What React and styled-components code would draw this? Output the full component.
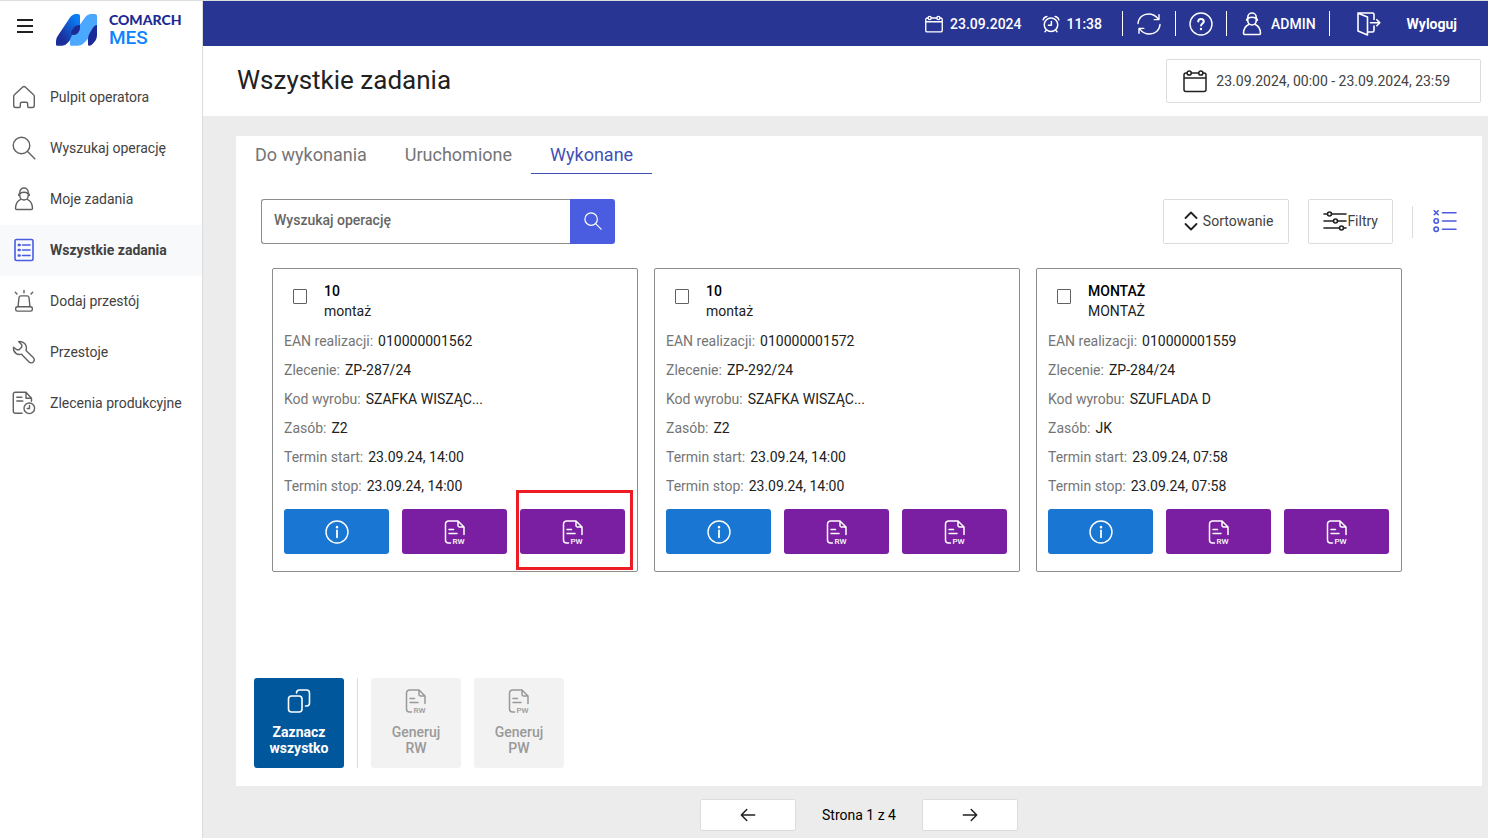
import React from "react";
import styled, { createGlobalStyle, css } from "styled-components";

const Global = createGlobalStyle`
  *, *::before, *::after { box-sizing: border-box; }
  body {
    margin: 0;
    background: #ececec;
    color: #212121;
    font-family: Roboto, "Liberation Sans", sans-serif;
    font-size: 14px;
    line-height: 20px;
  }
  button, input { font: inherit; color: inherit; }
  button { cursor: pointer; padding: 0; border: 0; background: none; }
  a { color: inherit; text-decoration: none; }
  h1, p, ul, dl, dd { margin: 0; padding: 0; }
  ul { list-style: none; }
`;

/* ---------- icons ---------- */

const Svg = styled.svg`
  display: block;
  flex: none;
  width: ${(p) => p.$size || 24}px;
  height: ${(p) => p.$size || 24}px;
  fill: none;
  stroke: currentColor;
  stroke-width: ${(p) => p.$stroke || 1.4};
  stroke-linecap: round;
  stroke-linejoin: round;
`;

const Icon = ({ size, stroke, children }) => (
  <Svg viewBox="0 0 24 24" $size={size} $stroke={stroke} aria-hidden="true">
    {children}
  </Svg>
);

const MenuIcon = () => (
  <Icon stroke={2}>
    <path d="M4 6h16M4 12h16M4 18h16" strokeLinecap="butt" />
  </Icon>
);
const HomeIcon = () => (
  <Icon>
    <path d="M1.7 11.2v9.3a2 2 0 0 0 2 2h3.6a1 1 0 0 0 1-1v-2.7a1.6 1.6 0 0 1 1.6-1.6h4.2a1.6 1.6 0 0 1 1.6 1.6v2.7a1 1 0 0 0 1 1h3.600a2 2 0 0 0 2-2v-9.300a2 2 0 0 0-.7-1.500L13.500 2.200a2.200 2.200 0 0 0-3 0L2.400 9.700a2 2 0 0 0-.7 1.500z" />
  </Icon>
);
const SearchIcon = ({ size, stroke }) => (
  <Icon size={size} stroke={stroke}>
    <circle cx="9.5" cy="9.5" r="8.3" />
    <path d="M15.500 15.500l7.300 7.300" />
  </Icon>
);
const WorkerIcon = ({ stroke }) => (
  <Icon stroke={stroke}>
    <path d="M7.800 6V5.200a4.200 4.200 0 0 1 8.400 0V6M6.600 8.200c0-1.100.7-1.700 1.500-1.900 2.400-1.300 5.400-1.300 7.800 0 .8.2 1.500.8 1.500 1.900M7.800 7.500v1.300a4.200 4.200 0 0 0 8.400 0V7.500" />
    <path d="M8.700 12.400c-3 1.200-5 3.900-5.200 8.900 0 .8.400 1.200 1.100 1.200h14.800c.7 0 1.100-.4 1.100-1.200-.2-5-2.200-7.700-5.200-8.900" />
  </Icon>
);
const TasksIcon = () => (
  <Icon stroke={1.6}>
    <rect x="3" y="1.5" width="18" height="21" rx="1.5" />
    <path d="M10.500 7h7.500M10.500 12h7.500M10.500 17.500h7.500" />
    <path d="M6.800 7h.8M6.800 12h.8M6.800 17.500h.8" strokeWidth="2.6" />
  </Icon>
);
const AlarmLampIcon = () => (
  <Icon>
    <path d="M6 17.800l1-9.100a2 2 0 0 1 2-1.800h6a2 2 0 0 1 2 1.800l1 9.100" />
    <rect x="3.7" y="17.8" width="16.6" height="4.3" rx="1.5" />
    <path d="M12 1.500v2.200M3.300 3.200l1.700 1.700M20.700 3.200L19 4.900" />
  </Icon>
);
const WrenchIcon = () => (
  <Icon>
    <path d="M1.500 7.200c-.5 5.200 3.600 8.300 8 7l7.300 7.500a2.900 2.900 0 0 0 4.800-.1 2.900 2.900 0 0 0-.4-4.100l-7.200-6.900c1.700-5.300-2.300-9.900-7.400-9l3.200 3.200v2.300l-2.700 2.700H4.900z" />
  </Icon>
);
const OrderIcon = () => (
  <Icon>
    <path d="M10 22.300H3.300a2 2 0 0 1-2-2V3.200a2 2 0 0 1 2-2H14l5.500 6v3M14 1.500v5.700h5.500M4.800 6.200h5M4.800 10h6" />
    <circle cx="17.3" cy="17.3" r="5.3" />
    <path d="M17.500 14.500v3h-2.300" />
  </Icon>
);
const CalendarIcon = ({ size, stroke }) => (
  <Icon size={size} stroke={stroke}>
    <path d="M4 4H3a2 2 0 0 0-2 2v14.500a2 2 0 0 0 2 2h18a2 2 0 0 0 2-2V6a2 2 0 0 0-2-2h-1M8.300 4h7.400M1 9h22" />
    <circle cx="6.2" cy="4" r="2.1" />
    <circle cx="17.8" cy="4" r="2.1" />
  </Icon>
);
const ClockIcon = () => (
  <Icon size={18} stroke={2}>
    <circle cx="12" cy="13" r="9" />
    <path d="M12.500 8.500v5.200H8.500M5.500 20.500L4 22.300M18.500 20.500l1.500 1.800M1.500 6.500a6 6 0 0 1 5-4.500M22.500 6.500a6 6 0 0 0-5-4.500" />
  </Icon>
);
const RefreshIcon = () => (
  <Icon>
    <path d="M1 11.500C1.500 5.500 6 2 11.500 2c4.200 0 7.500 2 9.800 5.200M22 2.800v4.800h-4.800M23 12.500C22.500 18.500 18 22 12.500 22c-4.200 0-7.500-2-9.800-5.200M2 21.200v-4.800h4.800" />
  </Icon>
);
const HelpIcon = () => (
  <Icon>
    <circle cx="12" cy="12" r="11" />
    <path d="M9.300 9.500c0-1.600 1.100-2.600 2.700-2.600s2.800 1 2.800 2.500c0 2-2.700 2.100-2.700 4.200" strokeWidth="2" />
    <path d="M12 16.900v.2" strokeWidth="2.4" />
  </Icon>
);
const ExitIcon = () => (
  <Icon stroke={1.6}>
    <path d="M1 1.200v17.800l9.500 4V5zM1 1h14.500A1.500 1.500 0 0 1 17 2.500v5M17 14v4.500a1.500 1.500 0 0 1-1.500 1.500h-5" />
    <path d="M13.500 10.700h9.300M19.800 7.700l3 3-3 3" />
  </Icon>
);
const SortIcon = () => (
  <Icon stroke={1.8}>
    <path d="M6.500 9L12 3.500 17.500 9M6.500 15l5.500 5.500 5.500-5.500" />
  </Icon>
);
const FilterIcon = () => (
  <Icon stroke={1.6}>
    <path d="M1 5h3.500M8.500 5H23M1 12h9.500M14.500 12H23M1 19h15.500M20.500 19H23" />
    <circle cx="6.5" cy="5" r="2" />
    <circle cx="12.5" cy="12" r="2" />
    <circle cx="18.5" cy="19" r="2" />
  </Icon>
);
const ListModeIcon = () => (
  <Icon stroke={1.6}>
    <path d="M1.200 1.700l4 4M5.200 1.700l-4 4M9.500 3.700H23M9.500 12H23M9.500 20.300H23" />
    <circle cx="3.2" cy="12" r="2.2" />
    <circle cx="3.2" cy="20.3" r="2.2" />
  </Icon>
);
const InfoIcon = () => (
  <Icon>
    <circle cx="12" cy="12" r="11" />
    <path d="M12 10.500v6.800" strokeWidth="1.8" />
    <path d="M12 7v.2" strokeWidth="2.4" />
  </Icon>
);
const DocIcon = ({ code }) => (
  <Icon stroke={1.5}>
    <path d="M7.500 23H5.500a3 3 0 0 1-3-3V4a3 3 0 0 1 3-3H15l6 6v7.500M15 1.200V5.500A1.500 1.500 0 0 0 16.500 7H21M6 9.500h4.500M6 13.500h8" />
    <text x="9.500" y="23.500" fill="currentColor" stroke="none" fontSize="8" fontWeight="500">
      {code}
    </text>
  </Icon>
);
const SelectAllIcon = () => (
  <Icon stroke={1.6}>
    <rect x="1.5" y="7" width="13.5" height="16" rx="3" />
    <path d="M9.500 4V4a3 3 0 0 1 3-3h7a3 3 0 0 1 3 3v10a3 3 0 0 1-3 3h-1" />
  </Icon>
);
const ArrowIcon = ({ right }) => (
  <Icon size={20} stroke={1.8}>
    <path d={right ? "M4 12h16M13.500 5.500l6.500 6.500-6.500 6.500" : "M20 12H4M10.500 5.500L4 12l6.500 6.500"} />
  </Icon>
);

const LogoMark = styled.svg`
  display: block;
  width: 42px;
  height: 32px;
`;

const Logo = () => (
  <LogoMark viewBox="0 0 42 32" aria-hidden="true">
    <defs>
      <linearGradient id="stroke-blue" x1="0" y1="1" x2="1" y2="0">
        <stop offset="0.25" stopColor="#1b2f9c" />
        <stop offset="0.85" stopColor="#0b7df5" />
      </linearGradient>
    </defs>
    <path fill="url(#stroke-blue)" d="M0 30.500V27q0-3 2-5.500L14 3.500Q16.500 0 20 0h2q2 0 2 2v9q0 3-2 6L12 28.500Q9.500 31.700 6 31.700H1.200Q0 31.700 0 30.500z" />
    <path fill="#4aa9ff" d="M14 30.500V27q0-3 2-5.500L29 3.500Q31.500 0 35 0h4q2 0 2 2v10q0 3-2 5.500L28 29q-2.300 2.700-6 2.700h-6.500q-1.500 0-1.500-1.200z" />
    <path fill="#1b2a94" d="M24 11v3q0 2-1.300 4-1.700 3-5.200 3-2.500 0-2.500-2 0-2 2.500-5 2-3 6.500-3z" />
    <path fill="#1b2a94" d="M32 30.500V25q0-3 1.500-5.500l3-5Q38.500 11 41 11v10q0 3-1.500 5.500l-2.500 3q-1.500 2.200-4 2.200-1 0-1-1.200z" />
  </LogoMark>
);

/* ---------- shell ---------- */

const Shell = styled.div`
  display: flex;
  min-height: 100vh;
  border-top: 1px solid #dcdfe0;
`;

const Sidebar = styled.aside`
  flex: none;
  width: 203px;
  background: #fff;
  border-right: 1px solid #dcdcdc;
`;

const Brand = styled.div`
  display: flex;
  align-items: flex-start;
  height: 71px;
  padding: 13px 0 0 13px;
`;

const MenuButton = styled.button`
  width: 24px;
  height: 24px;
  margin-right: 19px;
`;

const BrandName = styled.div`
  display: flex;
  flex-direction: column;
  margin-left: 11px;
`;

const BrandCompany = styled.span`
  color: #1b2a94;
  font: 900 14px/12px Lato, sans-serif;
`;

const BrandProduct = styled.span`
  color: #0d84ff;
  font-size: 19px;
  font-weight: 500;
  line-height: 24px;
`;

const NavLink = styled.a`
  display: flex;
  align-items: center;
  gap: 14px;
  height: 51px;
  padding: 0 11px 2px 12px;
  white-space: nowrap;
  color: #424242;
  svg { color: #616161; }
  ${(p) =>
    p.$active &&
    css`
      background: #f7f9fb;
      font-weight: 700;
      svg { color: #4a5ce0; }
    `}
`;

const Main = styled.div`
  display: flex;
  flex-direction: column;
  flex: 1;
  min-width: 0;
`;

const TopBar = styled.header`
  display: flex;
  align-items: center;
  justify-content: flex-end;
  height: 45px;
  padding-right: 4px;
  background: #283593;
  color: #fff;
`;

const TopItem = styled.div`
  display: flex;
  align-items: center;
  gap: 7px;
  margin-right: 20px;
  font-weight: 500;
`;

const TopButton = styled.button`
  display: flex;
  align-items: center;
  gap: ${(p) => p.$gap || 7}px;
  margin: 0 ${(p) => p.$side || 13}px;
  font-weight: ${(p) => p.$weight || 500};
`;

const TopDivider = styled.span`
  width: 1px;
  height: 25px;
  background: #fff;
`;

const PageHead = styled.div`
  display: flex;
  align-items: center;
  justify-content: space-between;
  height: 70px;
  padding: 0 7px 0 34px;
  background: #fff;
`;

const Title = styled.h1`
  padding-bottom: 2px;
  font-size: 26px;
  font-weight: 400;
  line-height: 32px;
`;

const OutlineButton = styled.button`
  display: flex;
  align-items: center;
  justify-content: center;
  height: 45px;
  padding: 0 ${(p) => p.$pad}px 2px;
  background: #fff;
  border: 1px solid #dcdcdc;
  border-radius: 2px;
  white-space: nowrap;
  color: #424242;
  svg { color: #212121; }
`;

const DateRangeButton = styled(OutlineButton)`
  gap: 9px;
  height: 44px;
  padding: 0 30px 0 16px;
`;

const Panel = styled.main`
  display: flex;
  flex-direction: column;
  flex: 1;
  margin: 20px 6px 0 33px;
  background: #fff;
`;

const Tabs = styled.nav`
  display: flex;
`;

const Tab = styled.button`
  height: 38px;
  padding: 0 19px;
  border-bottom: 1px solid ${(p) => (p.$active ? "#3f51b5" : "transparent")};
  color: ${(p) => (p.$active ? "#3f51b5" : "#757575")};
  font-size: 18px;
`;

const Toolbar = styled.div`
  display: flex;
  align-items: center;
  justify-content: space-between;
  padding: 25px 25px 0;
`;

const SearchForm = styled.form`
  display: flex;
  width: 354px;
  height: 45px;
`;

const SearchInput = styled.input`
  flex: 1;
  min-width: 0;
  padding: 0 12px 4px;
  border: 1px solid #8c8c8c;
  border-right: 0;
  border-radius: 3px 0 0 3px;
  font-weight: 500;
  outline: none;
  &::placeholder { color: #666; opacity: 1; }
`;

const SearchButton = styled.button`
  display: grid;
  place-items: center;
  width: 45px;
  padding-bottom: 2px;
  background: #4a5ce0;
  border-radius: 0 3px 3px 0;
  color: #fff;
`;

const ToolGroup = styled.div`
  display: flex;
  align-items: center;
  gap: 19px;
`;

const ToolDivider = styled.span`
  width: 1px;
  height: ${(p) => p.$height}px;
  background: #dcdcdc;
`;

const ModeButton = styled.button`
  padding: 0 0 2px 1px;
  color: #4a5ce0;
`;

const CardGrid = styled.div`
  display: grid;
  grid-template-columns: repeat(3, 1fr);
  gap: 16px;
  padding: 24px 80px 24px 36px;
`;

const Card = styled.article`
  padding: 12px 12px 17px 11px;
  border: 1px solid #8c8c8c;
  border-radius: 2px;
`;

const CardHead = styled.label`
  display: flex;
  align-items: flex-start;
  gap: 17px;
  margin-bottom: 6px;
  padding-left: 9px;
`;

const Check = styled.input`
  appearance: none;
  width: 14px;
  height: 15px;
  margin: 8px 0 0;
  border: 1px solid #616161;
  border-radius: 1px;
  &:checked { background: #4a5ce0; }
`;

const CardName = styled.span`
  display: flex;
  flex-direction: column;
  strong { color: #000; font-weight: 500; }
`;

const Field = styled.div`
  display: flex;
  gap: 5px;
  line-height: 29px;
  white-space: nowrap;
  dt { color: #757575; }
`;

const CardActions = styled.div`
  display: grid;
  grid-template-columns: repeat(3, 1fr);
  gap: 13px;
  margin-top: 8px;
`;

const ActionSlot = styled.div`
  position: relative;
`;

const ActionButton = styled.button`
  display: grid;
  place-items: center;
  width: 100%;
  height: 45px;
  border-radius: 3px;
  background: ${(p) => (p.$info ? "#1976d2" : "#7b1fa2")};
  color: #fff;
`;

const Marker = styled.span`
  position: absolute;
  inset: -19px -8px -16px -4px;
  border: 3px solid #ed1c24;
  pointer-events: none;
`;

const BulkBar = styled.div`
  display: flex;
  gap: 13px;
  margin-top: auto;
  padding: 0 18px 18px;
`;

const BulkButton = styled.button`
  display: flex;
  flex-direction: column;
  align-items: center;
  gap: 11px;
  width: 90px;
  height: 90px;
  padding-top: 11px;
  border-radius: 3px;
  background: ${(p) => (p.$primary ? "#01579b" : "#f2f2f2")};
  color: ${(p) => (p.$primary ? "#fff" : "#999")};
  font-weight: ${(p) => (p.$primary ? 700 : 500)};
  line-height: 16px;
`;

const BulkLabel = styled.span`
  width: 70px;
`;

const Pager = styled.nav`
  display: flex;
  align-items: center;
  justify-content: center;
  gap: 26px;
  padding: 13px 6px 7px 33px;
  color: #000;
`;

const PagerButton = styled.button`
  display: grid;
  place-items: center;
  width: 96px;
  height: 32px;
  background: #fff;
  border: 1px solid #dcdcdc;
  border-radius: 2px;
  color: #212121;
`;

/* ---------- data ---------- */

const nav = [
  ["Pulpit operatora", HomeIcon],
  ["Wyszukaj operację", SearchIcon],
  ["Moje zadania", WorkerIcon],
  ["Wszystkie zadania", TasksIcon],
  ["Dodaj przestój", AlarmLampIcon],
  ["Przestoje", WrenchIcon],
  ["Zlecenia produkcyjne", OrderIcon],
];

const tabs = ["Do wykonania", "Uruchomione", "Wykonane"];

const tasks = [
  {
    name: "10",
    operation: "montaż",
    marked: true,
    fields: [
      ["EAN realizacji:", "010000001562"],
      ["Zlecenie:", "ZP-287/24"],
      ["Kod wyrobu:", "SZAFKA WISZĄC..."],
      ["Zasób:", "Z2"],
      ["Termin start:", "23.09.24, 14:00"],
      ["Termin stop:", "23.09.24, 14:00"],
    ],
  },
  {
    name: "10",
    operation: "montaż",
    fields: [
      ["EAN realizacji:", "010000001572"],
      ["Zlecenie:", "ZP-292/24"],
      ["Kod wyrobu:", "SZAFKA WISZĄC..."],
      ["Zasób:", "Z2"],
      ["Termin start:", "23.09.24, 14:00"],
      ["Termin stop:", "23.09.24, 14:00"],
    ],
  },
  {
    name: "MONTAŻ",
    operation: "MONTAŻ",
    fields: [
      ["EAN realizacji:", "010000001559"],
      ["Zlecenie:", "ZP-284/24"],
      ["Kod wyrobu:", "SZUFLADA D"],
      ["Zasób:", "JK"],
      ["Termin start:", "23.09.24, 07:58"],
      ["Termin stop:", "23.09.24, 07:58"],
    ],
  },
];

const TaskCard = ({ task }) => (
  <Card>
    <CardHead>
      <Check type="checkbox" />
      <CardName>
        <strong>{task.name}</strong>
        <span>{task.operation}</span>
      </CardName>
    </CardHead>
    <dl>
      {task.fields.map(([label, value]) => (
        <Field key={label}>
          <dt>{label}</dt>
          <dd>{value}</dd>
        </Field>
      ))}
    </dl>
    <CardActions>
      <ActionButton type="button" $info aria-label="Informacje">
        <InfoIcon />
      </ActionButton>
      <ActionButton type="button" aria-label="RW">
        <DocIcon code="RW" />
      </ActionButton>
      <ActionSlot>
        <ActionButton type="button" aria-label="PW">
          <DocIcon code="PW" />
        </ActionButton>
        {task.marked && <Marker />}
      </ActionSlot>
    </CardActions>
  </Card>
);

export default function App() {
  return (
    <>
      <Global />
      <Shell>
        <Sidebar>
          <Brand>
            <MenuButton type="button" aria-label="Menu">
              <MenuIcon />
            </MenuButton>
            <Logo />
            <BrandName>
              <BrandCompany>COMARCH</BrandCompany>
              <BrandProduct>MES</BrandProduct>
            </BrandName>
          </Brand>
          <nav>
            <ul>
              {nav.map(([label, NavIcon]) => (
                <li key={label}>
                  <NavLink href="#" $active={label === "Wszystkie zadania"}>
                    <NavIcon />
                    {label}
                  </NavLink>
                </li>
              ))}
            </ul>
          </nav>
        </Sidebar>
        <Main>
          <TopBar>
            <TopItem>
              <CalendarIcon size={18} stroke={1.8} />
              23.09.2024
            </TopItem>
            <TopItem>
              <ClockIcon />
              11:38
            </TopItem>
            <TopDivider />
            <TopButton type="button" $side={14} aria-label="Odśwież">
              <RefreshIcon />
            </TopButton>
            <TopDivider />
            <TopButton type="button" aria-label="Pomoc">
              <HelpIcon />
            </TopButton>
            <TopDivider />
            <TopButton type="button">
              <WorkerIcon stroke={1.6} />
              ADMIN
            </TopButton>
            <TopDivider />
            <TopButton type="button" $side={27} $gap={26} $weight={700}>
              <ExitIcon />
              Wyloguj
            </TopButton>
          </TopBar>
          <PageHead>
            <Title>Wszystkie zadania</Title>
            <DateRangeButton type="button">
              <CalendarIcon stroke={1.5} />
              23.09.2024, 00:00 - 23.09.2024, 23:59
            </DateRangeButton>
          </PageHead>
          <Panel>
            <Tabs>
              {tabs.map((label) => (
                <Tab key={label} type="button" $active={label === "Wykonane"}>
                  {label}
                </Tab>
              ))}
            </Tabs>
            <Toolbar>
              <SearchForm onSubmit={(e) => e.preventDefault()}>
                <SearchInput
                  type="text"
                  placeholder="Wyszukaj operację"
                  aria-label="Wyszukaj operację"
                />
                <SearchButton type="submit" aria-label="Szukaj">
                  <SearchIcon size={18} stroke={1.6} />
                </SearchButton>
              </SearchForm>
              <ToolGroup>
                <OutlineButton type="button" $pad={15}>
                  <SortIcon />
                  Sortowanie
                </OutlineButton>
                <OutlineButton type="button" $pad={14}>
                  <FilterIcon />
                  Filtry
                </OutlineButton>
                <ToolDivider $height={32} />
                <ModeButton type="button" aria-label="Widok listy">
                  <ListModeIcon />
                </ModeButton>
              </ToolGroup>
            </Toolbar>
            <CardGrid>
              {tasks.map((task) => (
                <TaskCard key={task.fields[0][1]} task={task} />
              ))}
            </CardGrid>
            <BulkBar>
              <BulkButton type="button" $primary>
                <SelectAllIcon />
                <BulkLabel>Zaznacz wszystko</BulkLabel>
              </BulkButton>
              <ToolDivider $height={90} />
              <BulkButton type="button" disabled>
                <DocIcon code="RW" />
                <BulkLabel>Generuj RW</BulkLabel>
              </BulkButton>
              <BulkButton type="button" disabled>
                <DocIcon code="PW" />
                <BulkLabel>Generuj PW</BulkLabel>
              </BulkButton>
            </BulkBar>
          </Panel>
          <Pager>
            <PagerButton type="button" aria-label="Poprzednia strona">
              <ArrowIcon />
            </PagerButton>
            <span>Strona 1 z 4</span>
            <PagerButton type="button" aria-label="Następna strona">
              <ArrowIcon right />
            </PagerButton>
          </Pager>
        </Main>
      </Shell>
    </>
  );
}
